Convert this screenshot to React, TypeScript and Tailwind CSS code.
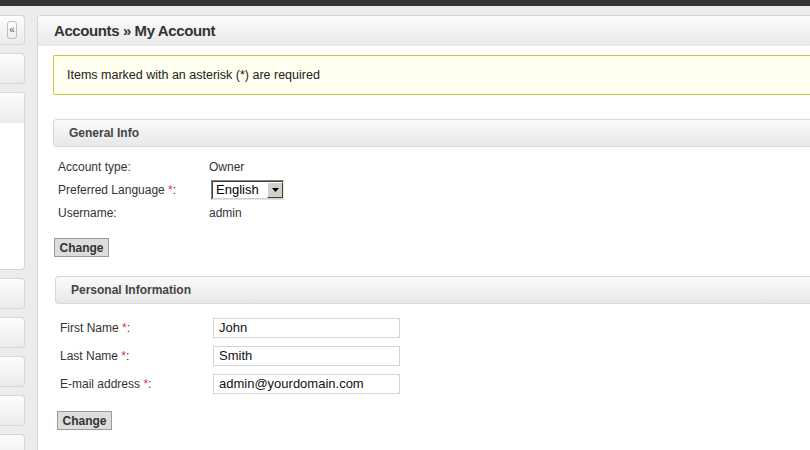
import React from 'react';

const SidePanel: React.FC<{ h: string; children?: React.ReactNode }> = ({ h, children }) => (
  <div className={`${h} border border-l-0 border-[#d6d6d6] rounded-r-[4px] bg-gradient-to-b from-[#fdfdfd] to-[#ebebeb]`}>
    {children}
  </div>
);

const Req = () => <span className="text-[#dd3333]">*</span>;

const SectionHeader: React.FC<{ title: string; className?: string }> = ({ title, className = '' }) => (
  <div
    className={`h-[28px] flex items-center pl-[15px] border border-r-0 border-[#d9d9d9] rounded-l-[4px] bg-gradient-to-b from-[#fafafa] to-[#e8e8e8] ${className}`}
  >
    <span className="text-[12px] font-bold text-[#444]">{title}</span>
  </div>
);

const ChangeButton: React.FC<{ className?: string }> = ({ className = '' }) => (
  <button
    className={`w-[55px] h-[19px] flex items-center justify-center border border-[#9a9a9a] bg-[#dddddd] text-[12px] font-bold text-[#333] leading-none ${className}`}
  >
    Change
  </button>
);

const LanguageSelect = () => (
  <div className="w-[73px] h-[20px] flex items-stretch border border-t-[#808080] border-l-[#808080] border-b-[#e4e4e4] border-r-[#e4e4e4] bg-white">
    <div className="flex-1 flex items-stretch border border-t-[#404040] border-l-[#404040] border-b-[#d4d0c8] border-r-0">
      <span className="flex-1 pl-[3px] text-[13px] leading-[16px] text-black">English</span>
      <div className="w-[16px] flex items-center justify-center bg-[#d4d0c8] border border-t-[#ffffff] border-l-[#ffffff] border-b-[#404040] border-r-[#404040]">
        <svg width="7" height="4" viewBox="0 0 7 4">
          <polygon points="0,0 7,0 3.5,4" fill="#000" />
        </svg>
      </div>
    </div>
  </div>
);

const InfoRow: React.FC<{ label: React.ReactNode; children: React.ReactNode }> = ({ label, children }) => (
  <div className="h-[23px] flex items-center">
    <div className="w-[151px] text-[12px] text-[#333]">{label}</div>
    <div className="text-[12px] text-[#333]">{children}</div>
  </div>
);

const InputRow: React.FC<{ label: React.ReactNode; value: string }> = ({ label, value }) => (
  <div className="h-[28px] flex items-center">
    <div className="w-[153px] text-[12px] text-[#333]">{label}</div>
    <div className="w-[187px] h-[20px] flex items-center border border-[#d4d4d4] bg-white pl-[5px] text-[13px] text-[#111]">
      {value}
    </div>
  </div>
);

export default function App() {
  return (
    <div className="w-[810px] h-[450px] overflow-hidden bg-[#ebedec] font-['Liberation_Sans',Arial,sans-serif]">
      <div className="h-[6px] bg-[#333333]" />
      <div className="flex pt-[9px]">
        {/* Sidebar */}
        <div className="w-[25px] shrink-0 flex flex-col gap-[8px]">
          <SidePanel h="h-[30px]">
            <div className="h-full flex items-center justify-end pr-[7px]">
              <div className="w-[10px] h-[18px] flex items-center justify-center border border-[#bdbdbd] rounded-[3px] bg-gradient-to-b from-white to-[#eeeeee] text-[10px] leading-none text-[#555]">
                «
              </div>
            </div>
          </SidePanel>
          <SidePanel h="h-[31px]" />
          <div className="h-[178px] border border-l-0 border-[#d6d6d6] rounded-r-[4px] bg-white overflow-hidden">
            <div className="h-[30px] bg-gradient-to-b from-[#fdfdfd] to-[#ebebeb]" />
          </div>
          <SidePanel h="h-[31px]" />
          <SidePanel h="h-[31px]" />
          <SidePanel h="h-[31px]" />
          <SidePanel h="h-[31px]" />
          <SidePanel h="h-[31px]" />
        </div>

        {/* Main panel */}
        <div className="ml-[12px] w-[820px] shrink-0 h-[440px] border border-r-0 border-[#d6d6d6] rounded-tl-[4px] bg-white">
          <div className="h-[30px] flex items-center pl-[16px] bg-gradient-to-b from-[#fcfcfc] to-[#e8e8e8] rounded-tl-[4px]">
            <h1 className="text-[15px] font-bold text-[#333] tracking-[-0.4px]">Accounts » My Account</h1>
          </div>

          <div className="pl-[15px]">
            <div className="mt-[9px] h-[40px] flex items-center pl-[13px] border border-r-0 border-[#c8c93c] rounded-l-[2px] bg-[#feffef]">
              <span className="text-[12.5px] text-[#222]">Items marked with an asterisk (*) are required</span>
            </div>

            {/* General Info */}
            <SectionHeader title="General Info" className="mt-[24px]" />
            <div className="mt-[8px] pl-[5px]">
              <InfoRow label="Account type:">Owner</InfoRow>
              <InfoRow label={<>Preferred Language <Req />:</>}>
                <div className="ml-[2px]">
                  <LanguageSelect />
                </div>
              </InfoRow>
              <InfoRow label="Username:">admin</InfoRow>
            </div>
            <ChangeButton className="mt-[14px] ml-[1px]" />

            {/* Personal Information */}
            <SectionHeader title="Personal Information" className="mt-[19px] ml-[2px] h-[27px]" />
            <div className="mt-[10px] pl-[7px]">
              <InputRow label={<>First Name <Req />:</>} value="John" />
              <InputRow label={<>Last Name <Req />:</>} value="Smith" />
              <InputRow label={<>E-mail address <Req />:</>} value="admin@yourdomain.com" />
            </div>
            <ChangeButton className="mt-[13px] ml-[4px]" />
          </div>
        </div>
      </div>
    </div>
  );
}
